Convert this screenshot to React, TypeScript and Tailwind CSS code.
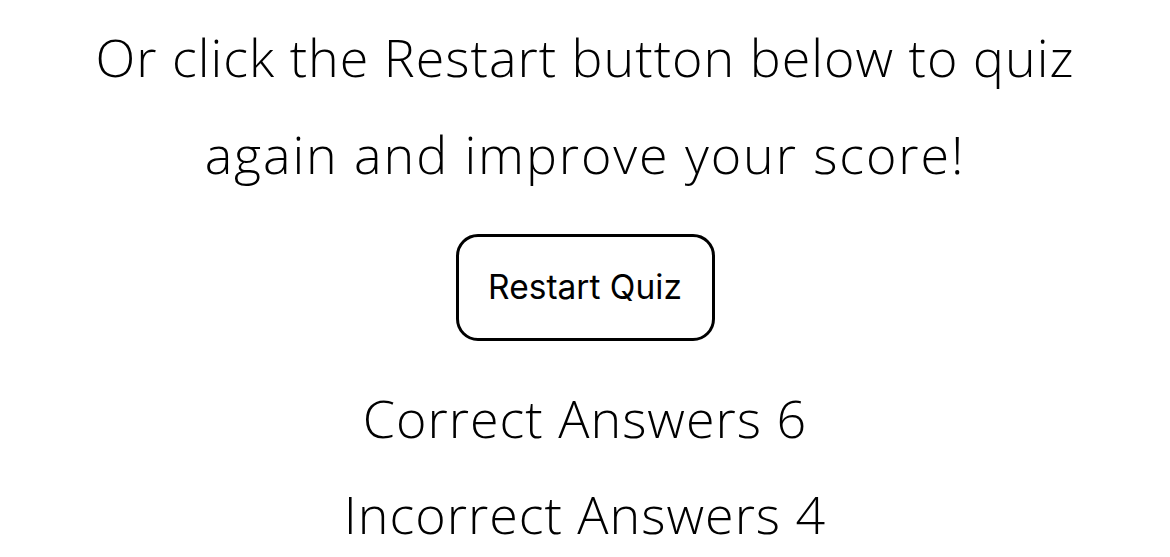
export default function App() {
    return (
        <div className="min-h-screen bg-white flex flex-col items-center pt-[8px] text-black">
            <p className="text-center text-[52px] leading-[97px] tracking-[1px] font-[350] font-['Open_Sans',sans-serif]">
                Or click the Restart button below to quiz
                <br />
                <span className="tracking-[1.9px]">again and improve your score!</span>
            </p>
            <button className="mt-[32px] w-[259px] h-[107px] border-[3px] border-black rounded-[22px] bg-white text-[33.5px] font-['Inter',sans-serif] text-black">
                Restart Quiz
            </button>
            <div className="mt-[29px] text-center text-[52px] leading-[96px] tracking-[1px] font-[350] font-['Open_Sans',sans-serif]">
                <p>Correct Answers 6</p>
                <p>Incorrect Answers 4</p>
            </div>
        </div>
    );
}
